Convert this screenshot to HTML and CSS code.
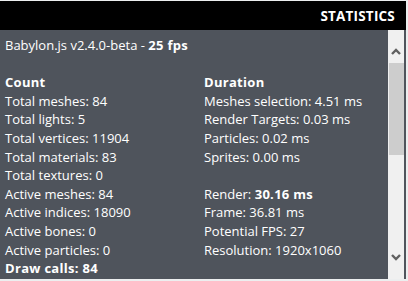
FILE: index.html
```html
<!DOCTYPE html>
<html>
<head>
<meta charset="utf-8">
<link rel="stylesheet" href="styles.css">
</head>
<body>
<div class="panel">
  <div class="header"><span class="header-title">STATISTICS</span></div>
  <div class="body">
    <div class="content">
      <div class="line">Babylon.js v2.4.0-beta - <b>25 fps</b></div>
      <div class="line">&nbsp;</div>
      <div class="cols">
        <div class="col">
          <div class="line"><b>Count</b></div>
          <div class="line">Total meshes: 84</div>
          <div class="line">Total lights: 5</div>
          <div class="line">Total vertices: 11904</div>
          <div class="line">Total materials: 83</div>
          <div class="line">Total textures: 0</div>
          <div class="line">Active meshes: 84</div>
          <div class="line">Active indices: 18090</div>
          <div class="line">Active bones: 0</div>
          <div class="line">Active particles: 0</div>
          <div class="line"><b>Draw calls: 84</b></div>
        </div>
        <div class="col">
          <div class="line"><b>Duration</b></div>
          <div class="line">Meshes selection: 4.51 ms</div>
          <div class="line">Render Targets: 0.03 ms</div>
          <div class="line">Particles: 0.02 ms</div>
          <div class="line">Sprites: 0.00 ms</div>
          <div class="line">&nbsp;</div>
          <div class="line">Render: <b>30.16 ms</b></div>
          <div class="line">Frame: 36.81 ms</div>
          <div class="line">Potential FPS: 27</div>
          <div class="line">Resolution: 1920x1060</div>
        </div>
      </div>
    </div>
    <div class="scrollbar">
      <div class="sb-btn sb-up">
        <svg width="10" height="7" viewBox="0 0 10 7"><polyline points="1,6 5,2 9,6" fill="none" stroke="#606060" stroke-width="2.4"/></svg>
      </div>
      <div class="sb-thumb"></div>
      <div class="sb-space"></div>
      <div class="sb-btn sb-down">
        <svg width="10" height="7" viewBox="0 0 10 7"><polyline points="1,1 5,5 9,1" fill="none" stroke="#606060" stroke-width="2.4"/></svg>
      </div>
    </div>
  </div>
</div>
</body>
</html>
```

FILE: styles.css
```css
html, body {
  margin: 0;
  padding: 0;
}
body {
  background: #eceeef;
  width: 408px;
  height: 281px;
  overflow: hidden;
  padding-top: 1px;
  box-sizing: border-box;
  font-family: "Open Sans", "Noto Sans", sans-serif;
}
.panel {
  width: 406px;
  height: 278px;
  display: flex;
  flex-direction: column;
  background: #4f545c;
}
.header {
  height: 29px;
  background: #000;
  display: flex;
  align-items: center;
  justify-content: flex-end;
  padding-right: 11px;
}
.header-title {
  color: #fff;
  font-weight: bold;
  font-size: 13.5px;
  letter-spacing: 0.2px;
}
.body {
  flex: 1;
  display: flex;
  padding-right: 2px;
  min-height: 0;
}
.content {
  flex: 1;
  padding: 6px 0 0 5px;
  color: #fff;
  font-size: 13px;
  line-height: 18.6px;
  overflow: hidden;
}
.line {
  white-space: nowrap;
}
.line b {
  letter-spacing: 0.3px;
}
.cols {
  display: grid;
  grid-template-columns: 199px 1fr;
}
.scrollbar {
  width: 16px;
  background: #f0f0f0;
  display: flex;
  flex-direction: column;
}
.sb-btn {
  display: flex;
  justify-content: center;
}
.sb-up {
  height: 33px;
  align-items: flex-end;
  padding-bottom: 8px;
  box-sizing: border-box;
}
.sb-thumb {
  height: 92px;
  margin-left: 1px;
  background: #cdcdcd;
}
.sb-space {
  flex: 1;
}
.sb-down {
  height: 28px;
  align-items: flex-start;
  padding-top: 3px;
  box-sizing: border-box;
}
```
